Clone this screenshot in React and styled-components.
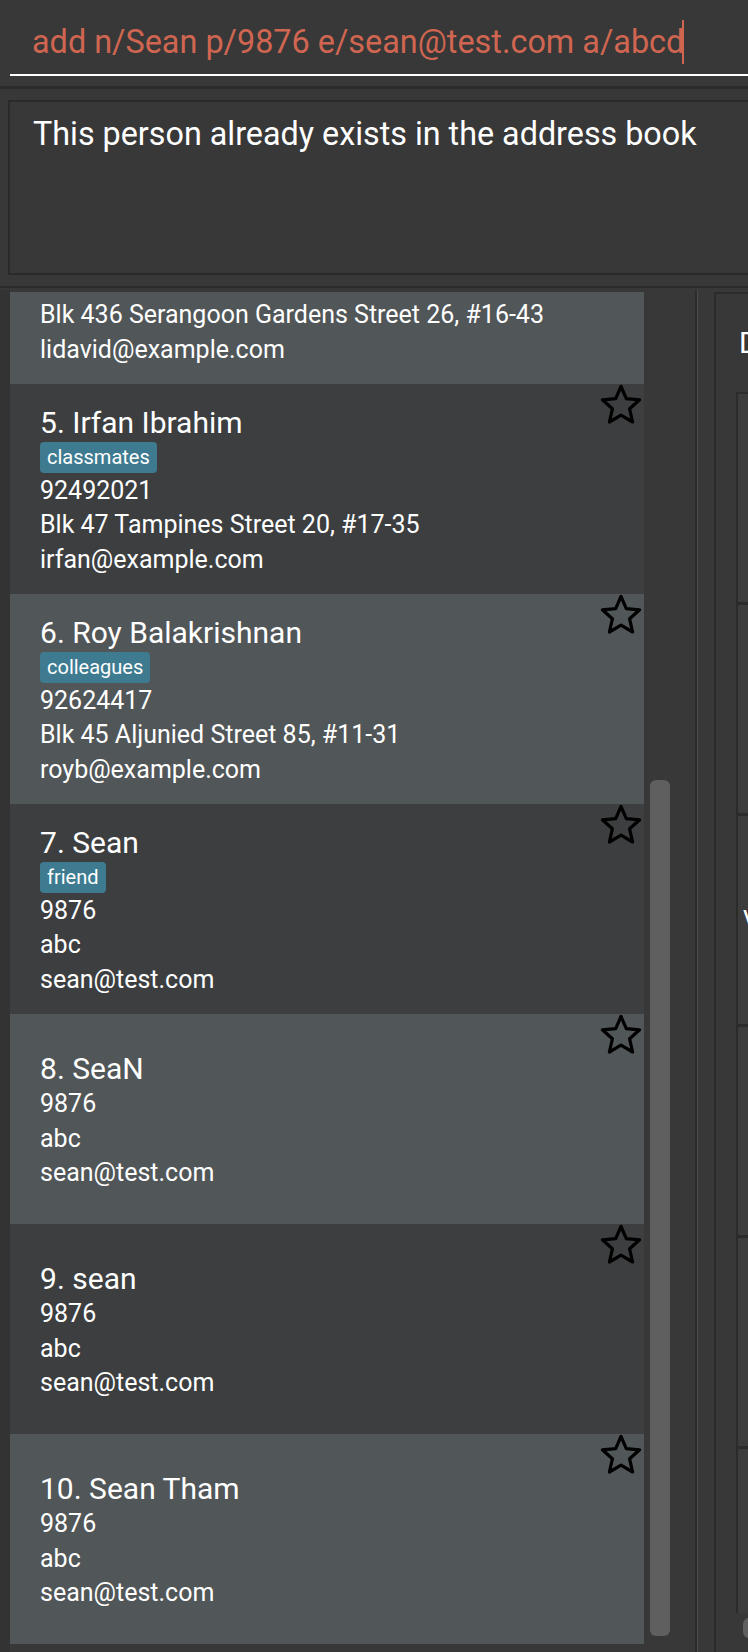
import React from 'react';
import styled, { createGlobalStyle } from 'styled-components';

const GlobalStyle = createGlobalStyle`
    html, body {
        margin: 0;
        padding: 0;
        background: #383838;
        overflow: hidden;
    }
    body {
        font-family: Roboto, "Liberation Sans", sans-serif;
        color: #ffffff;
    }
    * {
        box-sizing: border-box;
    }
`;

const people = [
    {id: 4, name: 'David Li', phone: '91031282', address: 'Blk 436 Serangoon Gardens Street 26, #16-43', email: 'lidavid@example.com', tags: ['family']},
    {id: 5, name: 'Irfan Ibrahim', phone: '92492021', address: 'Blk 47 Tampines Street 20, #17-35', email: 'irfan@example.com', tags: ['classmates']},
    {id: 6, name: 'Roy Balakrishnan', phone: '92624417', address: 'Blk 45 Aljunied Street 85, #11-31', email: 'royb@example.com', tags: ['colleagues']},
    {id: 7, name: 'Sean', phone: '9876', address: 'abc', email: 'sean@test.com', tags: ['friend']},
    {id: 8, name: 'SeaN', phone: '9876', address: 'abc', email: 'sean@test.com', tags: []},
    {id: 9, name: 'sean', phone: '9876', address: 'abc', email: 'sean@test.com', tags: []},
    {id: 10, name: 'Sean Tham', phone: '9876', address: 'abc', email: 'sean@test.com', tags: []},
];

const CARD_HEIGHT = 210;

const Star = () => (
    <StarIcon width="44" height="42" viewBox="-22 -22 44 42">
        <polygon
            points="0,-19.5 5.3,-7.3 18.6,-6.2 8.6,2.8 11.6,16 0,9.2 -11.6,16 -8.6,2.8 -18.6,-6.2 -5.3,-7.3"
            fill="none"
            stroke="#000"
            strokeWidth="3.2"
            strokeLinejoin="round"
        />
    </StarIcon>
);

const PersonCard = ({person}) => (
    <Card $light={person.id % 2 === 0}>
        <Info>
            <Name>{person.id}. {person.name}</Name>
            {person.tags.length > 0 && (
                <Tags>
                    {person.tags.map((t) => <Tag key={t}>{t}</Tag>)}
                </Tags>
            )}
            <Detail>{person.phone}</Detail>
            <Detail>{person.address}</Detail>
            <Detail>{person.email}</Detail>
        </Info>
        <Star />
    </Card>
);

const App = () => {
    return (
        <>
            <GlobalStyle />
            <Window>
                <CommandBox>
                    <CommandText>add n/Sean p/9876 e/sean@test.com a/abcd<Caret /></CommandText>
                    <Underline />
                </CommandBox>
                <Band $h={3} $top={10} />
                <ResultPane>
                    <ResultBox>This person already exists in the address book</ResultBox>
                </ResultPane>
                <Band $h={2} $top={11} />
                <Split>
                    <ListPane>
                        <ListViewport>
                            <List $offset={-118}>
                                {people.map((p) => <PersonCard key={p.id} person={p} />)}
                            </List>
                        </ListViewport>
                        <ScrollTrack>
                            <Thumb $top={488} $height={856} />
                        </ScrollTrack>
                    </ListPane>
                    <Divider />
                    <DetailPane>
                        <DetailPanel>
                            <PanelTitle>Details</PanelTitle>
                            <Grid>
                                <Cell />
                                <Cell />
                                <Cell>View</Cell>
                                <Cell />
                                <Cell />
                                <Cell />
                            </Grid>
                            <HScroll />
                        </DetailPanel>
                    </DetailPane>
                </Split>
            </Window>
        </>
    );
};

const Window = styled.div`
    width: 748px;
    height: 1652px;
    overflow: hidden;
    background: #383838;
    display: flex;
    flex-direction: column;
`;

const CommandBox = styled.div`
    padding-left: 10px;
    flex-shrink: 0;
`;

const CommandText = styled.div`
    height: 74px;
    padding: 22px 0 12px 22px;
    font-size: 32.4px;
    line-height: 40px;
    color: #d06651;
    white-space: nowrap;
    display: flex;
    align-items: center;
`;

const Caret = styled.span`
    display: inline-block;
    width: 2px;
    height: 44px;
    margin: -2px 0 -2px -2px;
    background: #d06651;
`;

const Underline = styled.div`
    height: 2px;
    background: #ffffff;
`;

const Band = styled.div`
    height: ${(p) => p.$h}px;
    margin-top: ${(p) => p.$top}px;
    background: #2b2b2b;
    flex-shrink: 0;
`;

const ResultPane = styled.div`
    padding: 11px 0 0 8px;
    flex-shrink: 0;
`;

const ResultBox = styled.div`
    width: 800px;
    height: 175px;
    border: 2px solid #2a2a2a;
    padding: 12px 0 0 23px;
    font-size: 32.3px;
    line-height: 40px;
    color: #ffffff;
    white-space: nowrap;
`;

const Split = styled.div`
    flex: 1;
    display: grid;
    grid-template-columns: 695px 3px 1fr;
    margin-top: 2px;
    min-height: 0;
`;

const ListPane = styled.div`
    display: flex;
    padding: 2px 0 0 10px;
    background: #383838;
    box-shadow: inset 10px 0 0 #333333;
    min-height: 0;
`;

const ListViewport = styled.div`
    width: 634px;
    height: 100%;
    overflow: hidden;
    flex-shrink: 0;
`;

const List = styled.div`
    margin-top: ${(p) => p.$offset}px;
`;

const Card = styled.div`
    height: ${CARD_HEIGHT}px;
    display: flex;
    background: ${(p) => (p.$light ? '#515658' : '#3c3e3f')};
    padding: 4px 1px 0 30px;
`;

const Info = styled.div`
    flex: 1;
    display: flex;
    flex-direction: column;
    justify-content: center;
    min-width: 0;
`;

const Name = styled.div`
    font-size: 30px;
    line-height: 36px;
    color: #ffffff;
    white-space: nowrap;
`;

const Tags = styled.div`
    display: flex;
    gap: 6px;
    margin: 1px 0 1px;
`;

const Tag = styled.span`
    height: 31px;
    line-height: 31px;
    padding: 0 7px;
    font-size: 20px;
    color: #ffffff;
    background: #3e7b91;
    border-radius: 4px;
`;

const Detail = styled.div`
    font-size: 25px;
    line-height: 34.5px;
    color: #ffffff;
    white-space: nowrap;
`;

const StarIcon = styled.svg`
    flex-shrink: 0;
    margin-top: -4px;
`;

const ScrollTrack = styled.div`
    width: 20px;
    margin-left: 6px;
    position: relative;
`;

const Thumb = styled.div`
    position: absolute;
    left: 0;
    top: ${(p) => p.$top}px;
    width: 20px;
    height: ${(p) => p.$height}px;
    background: #5f5f5f;
    border-radius: 6px;
`;

const Divider = styled.div`
    background: #2b2b2b;
    box-shadow: inset -1px 0 0 #4d4d4d;
`;

const DetailPane = styled.div`
    padding: 2px 0 0 16px;
    min-width: 0;
`;

const DetailPanel = styled.div`
    width: 600px;
    height: 100%;
    border-left: 2px solid #2b2b2b;
    border-top: 2px solid #2b2b2b;
    padding: 0 0 0 20px;
    display: flex;
    flex-direction: column;
`;

const PanelTitle = styled.div`
    font-size: 29.5px;
    line-height: 36px;
    padding: 31px 0 0 3px;
    height: 98px;
    flex-shrink: 0;
    color: #ffffff;
    white-space: nowrap;
`;

const Grid = styled.div`
    height: 1221px;
    flex-shrink: 0;
    border-left: 2px solid #2b2b2b;
    border-top: 2px solid #2b2b2b;
    display: flex;
    flex-direction: column;
    overflow: hidden;
`;

const Cell = styled.div`
    height: 211px;
    flex-shrink: 0;
    background: #3c3c3c;
    border-bottom: 3px solid #2b2b2b;
    display: flex;
    align-items: center;
    padding-left: 5px;
    font-size: 25px;
    color: #ffffff;
`;

const HScroll = styled.div`
    margin: 5px 0 0 7px;
    width: 300px;
    height: 20px;
    flex-shrink: 0;
    background: #5f5f5f;
    border-radius: 6px;
`;

export default App;
